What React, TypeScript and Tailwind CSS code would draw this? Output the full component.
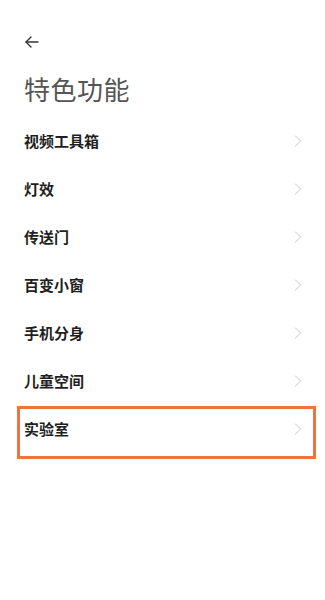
import { ChevronRight } from 'lucide-react';

const items = ['视频工具箱', '灯效', '传送门', '百变小窗', '手机分身', '儿童空间', '实验室'];

const App = () => {
  return (
    <div
      className="min-h-screen w-[325px] bg-white"
      style={{ fontFamily: '"Noto Sans CJK SC", "Noto Sans", sans-serif' }}
    >
      {/* Header */}
      <div className="px-6 pt-[35px]">
        <svg width="15" height="14" viewBox="0 0 15 14" fill="none" stroke="#333" strokeWidth="1.4" strokeLinecap="round" strokeLinejoin="round">
          <path d="M14 7H2" />
          <path d="M7 2L2 7l5 5" />
        </svg>
        <h1 className="mt-[24px] text-[26px] leading-[32px] font-normal text-[#555] tracking-[0.5px]">特色功能</h1>
      </div>

      {/* List */}
      <div className="mt-[12px]">
        {items.map((item, i) => (
          <div key={item} className="relative flex h-12 items-center justify-between pl-6 pr-[17px]">
            <span className="text-[15px] font-bold text-[#1f1f1f]">{item}</span>
            <ChevronRight className="h-5 w-5 text-[#c6c6c6]" strokeWidth={1.2} />
            {i === items.length - 1 && (
              <div className="pointer-events-none absolute left-[17px] right-[9px] top-[1px] h-[53px] border-[3px] border-[#ec7443]" />
            )}
          </div>
        ))}
      </div>
    </div>
  );
};

export default App;
